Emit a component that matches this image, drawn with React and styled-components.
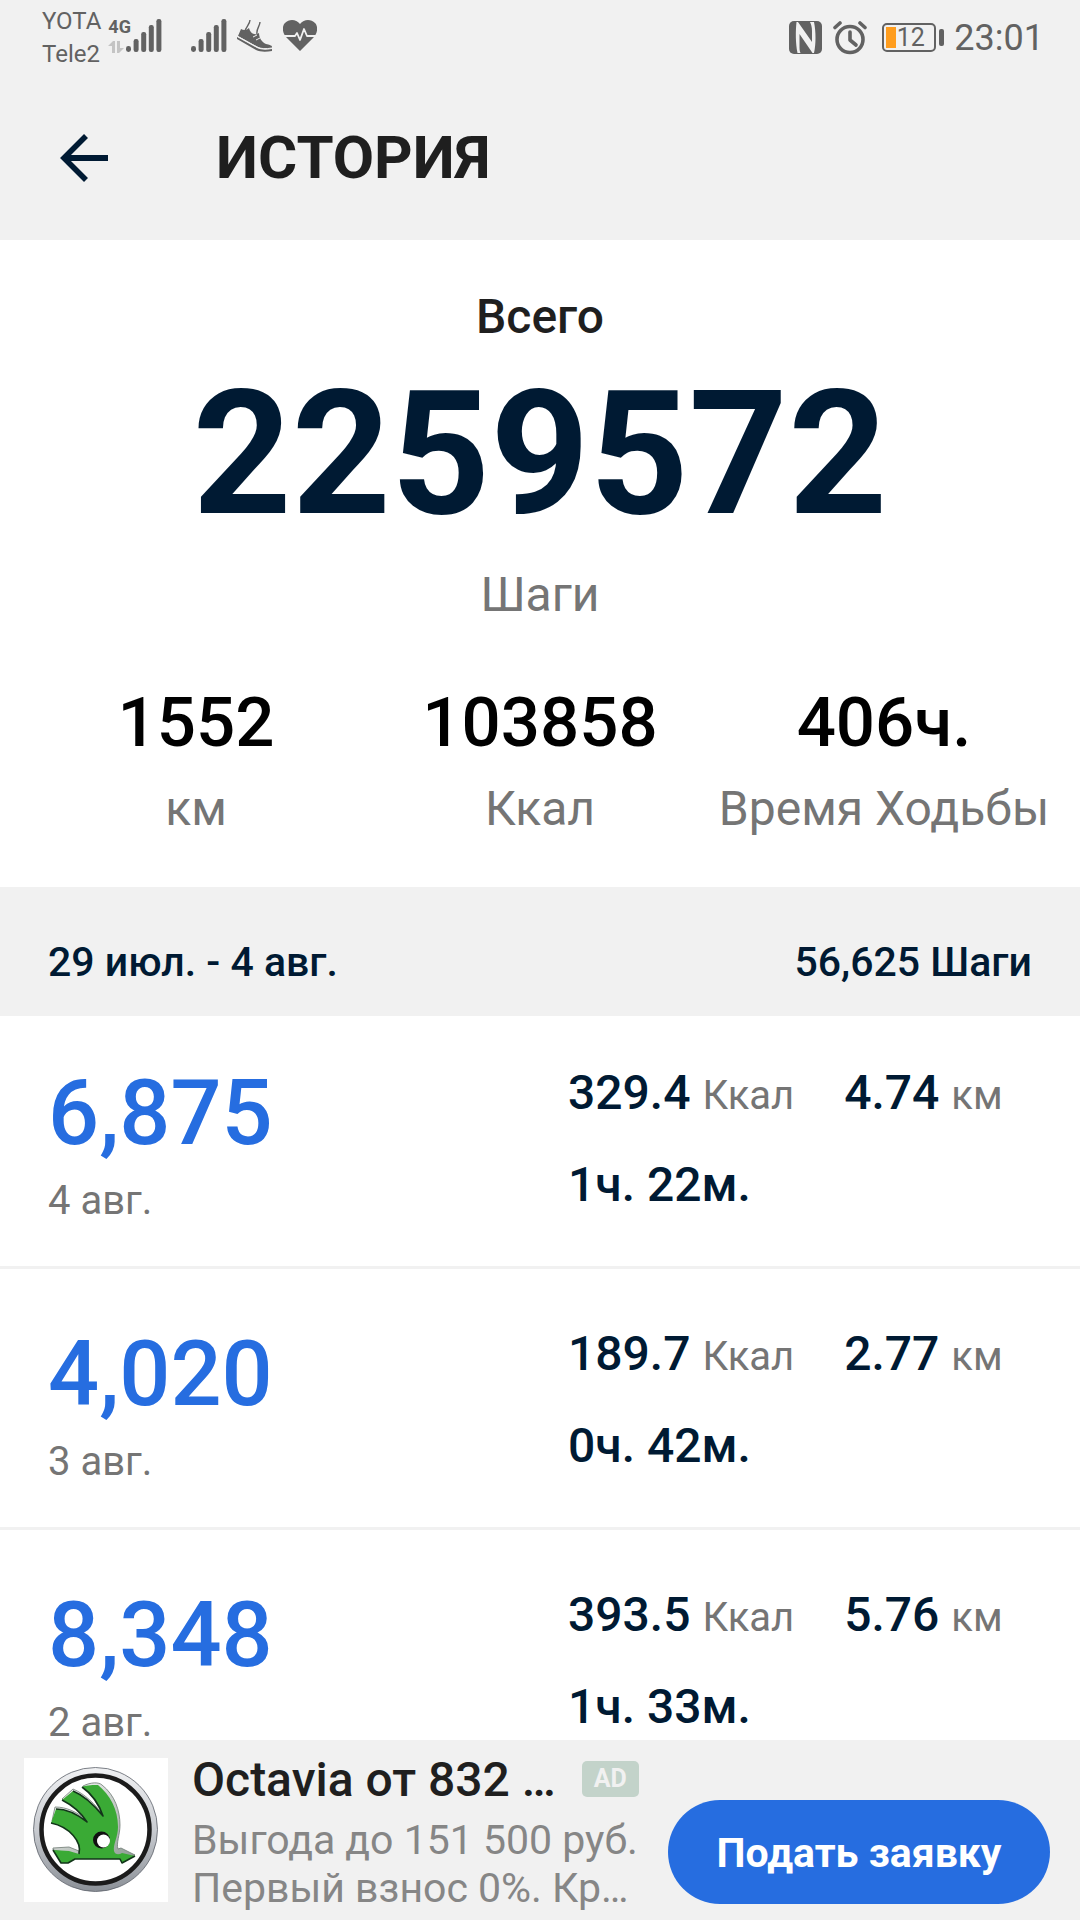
import React from 'react'
import styled, { createGlobalStyle } from 'styled-components'

const days = [
  { steps: '6,875', date: '4 авг.', kcal: '329.4', km: '4.74', time: '1ч. 22м.' },
  { steps: '4,020', date: '3 авг.', kcal: '189.7', km: '2.77', time: '0ч. 42м.' },
  { steps: '8,348', date: '2 авг.', kcal: '393.5', km: '5.76', time: '1ч. 33м.' }
]

const totals = [
  { value: '1552', label: 'км' },
  { value: '103858', label: 'Ккал' },
  { value: '406ч.', label: 'Время Ходьбы' }
]

const SignalIcon = () => (
  <svg width="36" height="34" viewBox="0 0 36 34" fill="#626262" aria-hidden="true">
    <rect x="0" y="27" width="5" height="6" rx="2.4" />
    <rect x="7.6" y="20" width="5" height="13" rx="2.2" />
    <rect x="15.2" y="13" width="5" height="20" rx="2.2" />
    <rect x="22.8" y="6" width="5" height="27" rx="2.2" />
    <rect x="30.4" y="0" width="5" height="33" rx="2.2" />
  </svg>
)

const DataArrowsIcon = () => (
  <svg width="16" height="12" viewBox="0 0 16 12" fill="#c4c4c4" aria-hidden="true">
    <path d="M0 5 5 0h2v12H4V5zM9 0h3v7h4l-5 5H9z" />
  </svg>
)

const ShoeIcon = () => (
  <svg width="36" height="33" viewBox="0 0 36 33" aria-hidden="true">
    <path d="M13 1C13 5 9 8 8 12M23 3C23 7 19 10 20 15" stroke="#626262" strokeWidth="1.4" fill="none" />
    <path
      d="M4 10c3 2 6 1 8-1 1 4 4 7 8 6l2-1c0 5 3 9 7 11 3 1 6 1 6 3v1c-5 1-10 1-14-1L1 17z"
      fill="#626262"
    />
    <path d="m0 18 20 11c4 2 9 2 15 1v2c-6 1-12 1-16-1L0 20z" fill="#626262" />
    <path d="m0 17 20 11c4 2 9 2 15 1" stroke="#f1f1f1" strokeWidth="1" fill="none" />
    <path d="m16 18 4-2m-1 5 4-2" stroke="#f1f1f1" strokeWidth="1" />
  </svg>
)

const HeartIcon = () => (
  <svg width="34" height="31" viewBox="0 0 34 31" aria-hidden="true">
    <path
      d="M17 31 3 17C-1 12-1 6 2 3c4-4 11-4 15 1 4-5 11-5 15-1 3 3 3 9-1 14z"
      fill="#626262"
    />
    <path
      d="M1 16h11l2-3 3 7 4-11 3 7h9"
      fill="none"
      stroke="#f1f1f1"
      strokeWidth="1.8"
      strokeLinejoin="round"
    />
  </svg>
)

const NfcIcon = () => (
  <svg width="34" height="34" viewBox="0 0 34 34" aria-hidden="true">
    <rect width="33" height="33" rx="5" fill="#626262" />
    <path
      d="M7.5 1h1.500l14 20V10c0-4-1-7-2-9h4c2 10 2 22 0 31h-1.500L10.500 13v11c0 4 0 6 1 8H8.500C6.500 22 6.500 10 7.500 1z"
      fill="#f1f1f1"
    />
  </svg>
)

const AlarmIcon = () => (
  <svg width="34" height="34" viewBox="0 0 34 34" fill="none" stroke="#626262" aria-hidden="true">
    <circle cx="17" cy="18.5" r="13" strokeWidth="3.6" />
    <path d="M17 11v8l6 5" strokeWidth="3.6" strokeLinecap="round" strokeLinejoin="round" />
    <path d="m2 6.5 5-4.5M32 6.5 27 2" strokeWidth="3.6" strokeLinecap="round" />
  </svg>
)

const BackIcon = () => (
  <svg width="48" height="48" viewBox="0 0 48 48" fill="none" aria-hidden="true">
    <path d="M26 2 4 24l22 22" stroke="#001a33" strokeWidth="5.6" />
    <path d="M5 24h43" stroke="#001a33" strokeWidth="6" />
  </svg>
)

const BrandLogo = () => (
  <svg width="144" height="144" viewBox="0 0 144 144" role="img" aria-label="Octavia">
    <defs>
      <linearGradient id="chrome" x1="0" y1="0" x2="0" y2="1">
        <stop offset="0" stopColor="#f0f1f3" />
        <stop offset="0.5" stopColor="#c9ccd1" />
        <stop offset="1" stopColor="#8b9097" />
      </linearGradient>
      <linearGradient id="bevel" x1="0" y1="0" x2="1" y2="1">
        <stop offset="0" stopColor="#ffffff" />
        <stop offset="1" stopColor="#8d9a92" />
      </linearGradient>
    </defs>
    <rect width="144" height="144" fill="#fff" />
    <circle cx="71.5" cy="71.5" r="62" fill="url(#chrome)" stroke="#5c6169" strokeWidth="0.8" />
    <circle cx="71.5" cy="71.5" r="54" fill="#fff" stroke="#1b1b1b" strokeWidth="4.5" />
    <path
      d="M28 63 31 49c12 0 22 5 33 14L79 57C72 44 66 34 59 28c8-4 16-4 19-1 13 10 18 26 18 40 0 10-4 18-2 24l3-1 14 7-14 3zM38 41l11-10c12 5 22 15 31 27zM29 92v-2l16-1 10 4v4z"
      fill="url(#bevel)"
      stroke="#6f7a74"
      strokeWidth="0.8"
    />
    <path
      d="M58 29c5-2 12-2 16-2 12 10 20 24 20 42 0 10-5 17-4 24 1 4 5 4 8 2l13 3-13 7-2-4H51l-7 4h-7l-8-13 16 1 10 3c3-12-9-27-28-31l5-14c9 0 21 5 31 13-7-11-15-17-25-22l11-9c10 4 21 14 30 25-4-12-11-22-21-29z"
      fill="#3aaa35"
    />
    <path
      d="M58 29c10 7 17 17 21 29-9-11-20-21-30-25M38 42c10 5 18 11 25 22-10-8-22-13-31-13M27 65c19 4 31 19 28 31M29 92l8 13h7l7-4h45l2 4 13-7"
      fill="none"
      stroke="#12351a"
      strokeWidth="1.6"
      strokeLinejoin="round"
    />
    <circle cx="77.5" cy="82" r="8.5" fill="#111" />
    <circle cx="79.5" cy="83" r="6.5" fill="#fff" />
  </svg>
)

const Total = ({ value, label }) => (
  <TotalItem>
    <TotalValue>{value}</TotalValue>
    <Caption>{label}</Caption>
  </TotalItem>
)

const DayRow = ({ steps, date, kcal, km, time }) => (
  <Row>
    <div>
      <DaySteps>{steps}</DaySteps>
      <DayDate>{date}</DayDate>
    </div>
    <Details>
      <Metrics>
        <Metric>
          {kcal} <Unit>Ккал</Unit>
        </Metric>
        <Metric>
          {km} <Unit>км</Unit>
        </Metric>
      </Metrics>
      <Metric>{time}</Metric>
    </Details>
  </Row>
)

export default function App() {
  return (
    <Screen>
      <GlobalStyle />
      <StatusBar>
        <Carriers>
          <span>YOTA</span>
          <span>Tele2</span>
        </Carriers>
        <Notices>
          <Network>
            <NetworkType>4G</NetworkType>
            <DataArrowsIcon />
          </Network>
          <SignalIcon />
          <NoticeIcons>
            <SignalIcon />
            <ShoeIcon />
            <HeartIcon />
          </NoticeIcons>
        </Notices>
        <SystemIcons>
          <NfcIcon />
          <AlarmIcon />
          <Battery>
            <BatteryBody>12</BatteryBody>
            <BatteryTip />
          </Battery>
          <Clock>23:01</Clock>
        </SystemIcons>
      </StatusBar>

      <Header>
        <BackButton aria-label="Назад">
          <BackIcon />
        </BackButton>
        <Title>ИСТОРИЯ</Title>
      </Header>

      <Summary>
        <SummaryTitle>Всего</SummaryTitle>
        <StepTotal>2259572</StepTotal>
        <Caption>Шаги</Caption>
        <Totals>
          {totals.map(total => (
            <Total key={total.label} {...total} />
          ))}
        </Totals>
      </Summary>

      <WeekHeader>
        <span>29 июл. - 4 авг.</span>
        <span>56,625 Шаги</span>
      </WeekHeader>

      <DayList>
        {days.map(day => (
          <DayRow key={day.date} {...day} />
        ))}
      </DayList>

      <AdBanner>
        <BrandLogo />
        <AdBody>
          <AdHeading>
            <AdTitle>Octavia от 832 …</AdTitle>
            <AdBadge>AD</AdBadge>
          </AdHeading>
          <AdText>Выгода до 151 500 руб.</AdText>
          <AdText>Первый взнос 0%. Кр…</AdText>
        </AdBody>
        <AdButton>Подать заявку</AdButton>
      </AdBanner>
    </Screen>
  )
}

const GlobalStyle = createGlobalStyle`
  * {
    box-sizing: border-box;
  }

  body {
    margin: 0;
    background: #fff;
    font-family: Roboto, sans-serif;
  }

  svg {
    display: block;
    flex-shrink: 0;
  }
`

const Screen = styled.div`
  display: flex;
  flex-direction: column;
  height: 100vh;
  overflow: hidden;
`

const StatusBar = styled.div`
  display: flex;
  align-items: center;
  flex-shrink: 0;
  height: 75px;
  padding: 0 36px 0 42px;
  background: #f1f1f1;
  color: #626262;
`

const Carriers = styled.div`
  display: flex;
  flex-direction: column;
  font-size: 24px;
  line-height: 33px;
`

const Notices = styled.div`
  display: flex;
  align-items: center;
  margin-left: 7px;
  padding-bottom: 4px;
`

const Network = styled.div`
  display: flex;
  flex-direction: column;
  gap: 5px;
  width: 18px;
`

const NetworkType = styled.span`
  font-size: 18px;
  line-height: 18px;
  font-weight: 700;
`

const NoticeIcons = styled.div`
  display: flex;
  align-items: center;
  gap: 10px;
  margin-left: 29px;
`

const SystemIcons = styled.div`
  display: flex;
  align-items: center;
  gap: 10px;
  margin-left: auto;
`

const Battery = styled.div`
  display: flex;
  align-items: center;
  gap: 3px;
  margin-left: 5px;
`

const BatteryBody = styled.div`
  width: 54px;
  height: 29px;
  padding-left: 3px;
  border: 2px solid #626262;
  border-radius: 5px;
  background: linear-gradient(#ff9d1e, #ff9d1e) 2px 2px / 10px 21px no-repeat;
  font-size: 25px;
  line-height: 25px;
  text-align: center;
`

const BatteryTip = styled.div`
  width: 5px;
  height: 17px;
  border-radius: 2px;
  background: #626262;
`

const Clock = styled.span`
  font-size: 36px;
  line-height: 42px;
`

const Header = styled.header`
  display: flex;
  align-items: center;
  flex-shrink: 0;
  gap: 108px;
  height: 165px;
  padding: 0 60px;
  background: #f1f1f1;
`

const BackButton = styled.button`
  padding: 0;
  border: 0;
  background: none;
  cursor: pointer;
`

const Title = styled.h1`
  margin: 0;
  color: #1f1f1f;
  font-size: 60px;
  font-weight: 700;
`

const Summary = styled.section`
  flex-shrink: 0;
  padding: 49px 0 50px;
  text-align: center;
`

const SummaryTitle = styled.h2`
  margin: 0;
  color: #1f1f1f;
  font-size: 48px;
  font-weight: 500;
  line-height: 56px;
`

const StepTotal = styled.div`
  margin: 9px 0 13px;
  color: #001a33;
  font-size: 173px;
  font-weight: 700;
  line-height: 200px;
`

const Caption = styled.div`
  color: #757575;
  font-size: 48px;
  line-height: 56px;
  white-space: nowrap;
`

const Totals = styled.div`
  display: grid;
  grid-template-columns: 392px 1fr 392px;
  margin-top: 60px;
`

const TotalItem = styled.div`
  display: flex;
  flex-direction: column;
  align-items: center;
  gap: 18px;
`

const TotalValue = styled.div`
  color: #000;
  font-size: 69px;
  font-weight: 500;
  line-height: 80px;
`

const WeekHeader = styled.div`
  display: flex;
  align-items: center;
  justify-content: space-between;
  flex-shrink: 0;
  height: 129px;
  padding: 20px 48px 0;
  background: #f1f1f1;
  color: #001a33;
  font-size: 41px;
  font-weight: 500;
`

const DayList = styled.ul`
  flex: 1;
  min-height: 0;
  margin: 0;
  padding: 0;
  overflow: hidden;
  list-style: none;
`

const Row = styled.li`
  display: grid;
  grid-template-columns: 520px 1fr;
  padding: 44px 48px 42px;
  border-bottom: 3px solid #f1f1f1;

  & + & {
    padding-top: 52px;
  }
`

const DaySteps = styled.div`
  color: #266de0;
  font-size: 90px;
  font-weight: 500;
  line-height: 108px;
`

const DayDate = styled.div`
  padding-top: 9px;
  color: #757575;
  font-size: 40px;
  line-height: 47px;
`

const Details = styled.div`
  display: flex;
  flex-direction: column;
  gap: 36px;
  padding-top: 5px;
`

const Metrics = styled.div`
  display: flex;
  gap: 50px;
`

const Metric = styled.span`
  color: #001a33;
  font-size: 48px;
  font-weight: 500;
  line-height: 56px;
  white-space: nowrap;
`

const Unit = styled.span`
  color: #757575;
  font-size: 40px;
  font-weight: 400;
  line-height: 1;
`

const AdBanner = styled.aside`
  display: flex;
  align-items: flex-start;
  flex-shrink: 0;
  height: 180px;
  padding: 18px 30px 0 24px;
  background: #f1f1f1;
`

const AdBody = styled.div`
  flex: 1;
  min-width: 0;
  padding-left: 24px;
`

const AdHeading = styled.div`
  display: flex;
  align-items: center;
  gap: 26px;
  height: 42px;
  margin-bottom: 16px;
`

const AdTitle = styled.span`
  color: #1f1f1f;
  font-size: 48px;
  font-weight: 500;
  white-space: nowrap;
`

const AdBadge = styled.span`
  width: 57px;
  border-radius: 5px;
  background: #c3d3ca;
  color: #f1f1f1;
  font-size: 25px;
  font-weight: 700;
  line-height: 36px;
  text-align: center;
`

const AdText = styled.div`
  color: #868686;
  font-size: 41px;
  line-height: 48px;
  white-space: nowrap;
`

const AdButton = styled.button`
  width: 382px;
  height: 104px;
  margin-top: 42px;
  padding: 2px 0 0;
  border: 0;
  border-radius: 52px;
  background: #266de0;
  color: #fff;
  font-family: inherit;
  font-size: 41px;
  font-weight: 700;
  cursor: pointer;
`
